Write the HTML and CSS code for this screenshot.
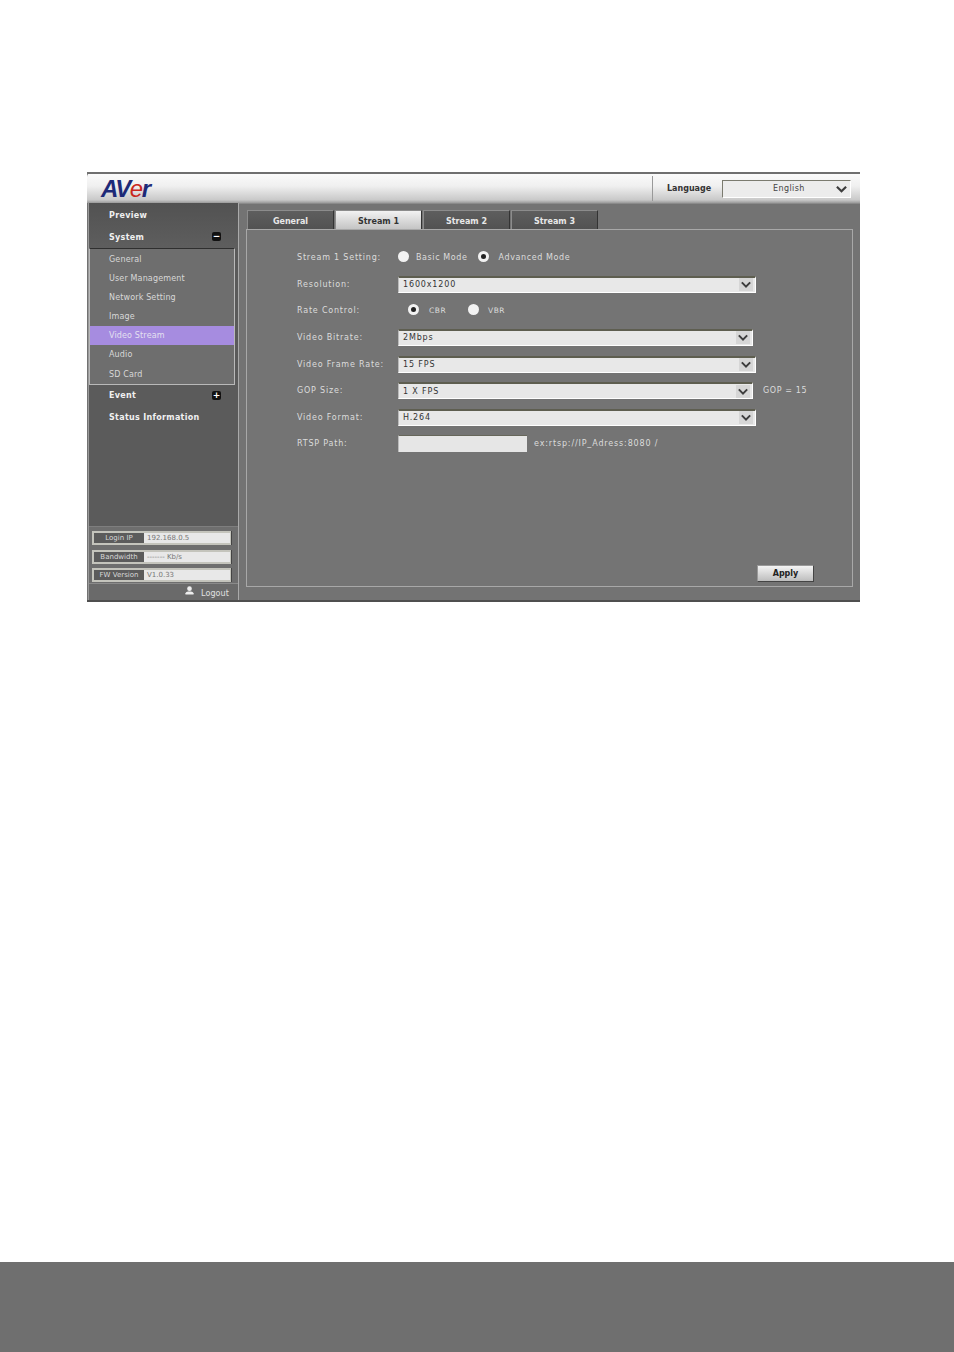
FILE: index.html
```html
<!DOCTYPE html>
<html lang="en">
<head>
<meta charset="utf-8">
<title>AVer Video Stream</title>
<link rel="stylesheet" href="styles.css">
</head>
<body>
<main class="page">
  <section class="app">
    <header class="top">
      <div class="logo"><span>AV</span><em>e</em><span>r</span></div>
      <div class="lang">
        <span class="lang-label">Language</span>
        <div class="lang-select"><span>English</span><svg class="chev" viewBox="0 0 12 8"><path d="M1 1.5 6 6.5 11 1.5" /></svg></div>
      </div>
    </header>
    <div class="body">
      <aside class="side">
        <div class="nav-main first">
          <div class="nav-item">Preview</div>
          <div class="nav-item">System<span class="toggle">−</span></div>
        </div>
        <div class="sub">
          <div class="sub-item">General</div>
          <div class="sub-item">User Management</div>
          <div class="sub-item">Network Setting</div>
          <div class="sub-item">Image</div>
          <div class="sub-item on">Video Stream</div>
          <div class="sub-item">Audio</div>
          <div class="sub-item">SD Card</div>
        </div>
        <div class="nav-main grow">
          <div class="nav-item">Event<span class="toggle">+</span></div>
          <div class="nav-item">Status Information</div>
        </div>
        <div class="info">
          <div class="info-row"><span class="k">Login IP</span><span class="v">192.168.0.5</span></div>
          <div class="info-row"><span class="k">Bandwidth</span><span class="v">------- Kb/s</span></div>
          <div class="info-row"><span class="k">FW Version</span><span class="v">V1.0.33</span></div>
        </div>
        <div class="logout">
          <svg viewBox="0 0 10 10"><circle cx="5" cy="3" r="2.6"/><path d="M0.5 9.5V8Q1 6.2 3.5 6H6.5Q9 6.2 9.5 8V9.5Z"/></svg>
          <span>Logout</span>
        </div>
      </aside>
      <div class="content">
        <nav class="tabs">
          <div class="tab">General</div>
          <div class="tab active">Stream 1</div>
          <div class="tab">Stream 2</div>
          <div class="tab">Stream 3</div>
        </nav>
        <div class="panel">
          <div class="form">
            <div class="row">
              <label>Stream 1 Setting:</label>
              <div class="radios">
                <span class="radio"></span><span class="rl rl-basic">Basic Mode</span>
                <span class="radio sel"></span><span class="rl rl-adv">Advanced Mode</span>
              </div>
            </div>
            <div class="row"><label>Resolution:</label><div class="select"><span>1600x1200</span><b class="btn"><svg class="chev" viewBox="0 0 12 8"><path d="M1 1.5 6 6.5 11 1.5"/></svg></b></div></div>
            <div class="row">
              <label>Rate Control:</label>
              <div class="radios rate">
                <span class="radio sel"></span><span class="rl rl-cbr">CBR</span>
                <span class="radio"></span><span class="rl">VBR</span>
              </div>
            </div>
            <div class="row"><label>Video Bitrate:</label><div class="select short"><span>2Mbps</span><b class="btn"><svg class="chev" viewBox="0 0 12 8"><path d="M1 1.5 6 6.5 11 1.5"/></svg></b></div></div>
            <div class="row"><label>Video Frame Rate:</label><div class="select"><span>15 FPS</span><b class="btn"><svg class="chev" viewBox="0 0 12 8"><path d="M1 1.5 6 6.5 11 1.5"/></svg></b></div></div>
            <div class="row"><label>GOP Size:</label><div class="select short"><span>1 X FPS</span><b class="btn"><svg class="chev" viewBox="0 0 12 8"><path d="M1 1.5 6 6.5 11 1.5"/></svg></b></div><span class="note gop">GOP = 15</span></div>
            <div class="row"><label>Video Format:</label><div class="select"><span>H.264</span><b class="btn"><svg class="chev" viewBox="0 0 12 8"><path d="M1 1.5 6 6.5 11 1.5"/></svg></b></div></div>
            <div class="row"><label>RTSP Path:</label><div class="field"></div><span class="note">ex:rtsp://IP_Adress:8080 /</span></div>
          </div>
          <div class="apply">Apply</div>
        </div>
      </div>
    </div>
  </section>
  <footer class="band"></footer>
</main>
</body>
</html>
```
FILE: styles.css
```css
* { box-sizing: border-box; }
html, body { margin: 0; padding: 0; background: #fff; }
body { font-family: "DejaVu Sans", "Liberation Sans", sans-serif; font-size: 8px; color: #e6e6e6; }
.page { width: 954px; height: 1352px; display: flex; flex-direction: column; padding-top: 172px; overflow: hidden; }

.app { width: 773px; height: 430px; margin-left: 87px; background: #727272; display: flex; flex-direction: column; border-bottom: 2px solid #4f4f4f; }

.top { height: 31px; display: flex; justify-content: space-between; align-items: stretch; background: linear-gradient(#6f6f6f 0 2px, #fafafa 2px, #f0f0f0 45%, #c9c9c9 90%, #9a9a9a); padding-left: 14px; border-radius: 5px 0 0 0; flex: none; }
.logo { font-family: "Liberation Sans", sans-serif; font-weight: bold; font-style: italic; font-size: 24px; letter-spacing: -1.4px; color: #1d2a78; line-height: 33px; }
.logo em { color: #c8281e; font-weight: normal; }
.lang { display: flex; align-items: center; margin-top: 2px; padding-right: 9px; }
.lang-label { color: #333; font-weight: bold; font-size: 8px; width: 70px; height: 25px; line-height: 26px; padding-left: 14px; border-left: 1px solid #999; }
.lang-select { width: 129px; height: 18px; display: flex; align-items: center; justify-content: space-between; padding: 0 3px 0 50px; background: #ececec; border: 1px solid #7b7b6f; border-right-color: #fff; border-bottom-color: #fff; color: #444; letter-spacing: 0.4px; }
.lang-select .chev { width: 11px; height: 8px; }

.chev { display: block; }
.chev path { fill: none; stroke: #3d3d3d; stroke-width: 2.4; }

.body { flex: 1; display: flex; min-height: 0; }

.side { width: 151px; flex: none; display: flex; flex-direction: column; margin-left: 1px; background: #5a5a5a; border-right: 1px solid #aaa; border-left: 1px solid #9a9a9a; }
.nav-main { background: linear-gradient(#525252, #5e5e5e); padding: 1px 0 0; flex: none; }
.nav-main.grow { flex: 1; background: #5b5b5b; padding-top: 0; }
.nav-item { height: 22px; line-height: 22px; padding-left: 20px; font-weight: bold; color: #f0f0f0; position: relative; letter-spacing: 0.3px; }
.first .nav-item { line-height: 24px; }
.toggle { position: absolute; right: 17px; top: 6px; width: 9px; height: 9px; border-radius: 2px; background: #111; color: #fff; font-size: 9px; line-height: 8px; text-align: center; font-weight: bold; letter-spacing: 0; }

.sub { height: 137px; margin-right: 3px; background: #6e6e6e; border: 1px solid #b9b9b9; border-top: 1px solid #2f2f2f; flex: none; padding-top: 1px; }
.sub-item { height: 19.1px; line-height: 19px; padding-left: 19px; color: #d8d8d8; letter-spacing: 0.15px; }
.sub-item.on { background: #a68ce0; color: #e4e0f0; }

.info { height: 58px; padding: 4px 2px 0; flex: none; background: #6e6e6e; border-top: 1px solid #7e7e7e; border-bottom: 1px solid #8a8a8a; display: flex; flex-direction: column; gap: 4.5px; }
.info-row { height: 14px; display: flex; padding: 2px 1px 2px 2px; background: #c4c4bc; margin: 0 4px 0 1px; border-right: 1px solid #444; }
.k { width: 50px; background: #5b5b5b; color: #d8d8d8; font-size: 7px; line-height: 10px; text-align: center; }
.v { flex: 1; background: #e8e8e8; color: #777; font-size: 7px; line-height: 10px; padding-left: 3px; }
.logout { height: 16px; display: flex; align-items: center; justify-content: flex-end; gap: 7px; padding: 0 9px 0 0; background: #6a6a6a; color: #e0e0e0; }
.logout svg { width: 9px; height: 9px; fill: #eee; margin-top: -3px; }
.logout span { margin-top: 2px; letter-spacing: 0.1px; }

.content { flex: 1; padding: 6px 7px 0 8px; background: #737373; border-top: 1px solid #8a8a8a; display: flex; flex-direction: column; }
.tabs { display: flex; gap: 1px; height: 19px; flex: none; }
.tab { width: 87px; text-align: center; line-height: 22px; background: linear-gradient(#5e5e5e, #525252); border: 1px solid #8c8c8c; border-bottom: 0; border-right-color: #333; font-weight: bold; color: #e8e8e8; }
.tab.active { background: linear-gradient(#f2f2f2, #c4c4c4); color: #333; }

.panel { height: 358px; background: #747474; border: 1px solid #a8a8a8; flex: none; position: relative; padding: 14.4px 0 0 50px; margin-left: -1px; }
.form { display: flex; flex-direction: column; }
.row { height: 26.6px; display: flex; align-items: center; color: #dcdcdc; }
.row label { width: 101px; flex: none; letter-spacing: 0.8px; }
.select { width: 358px; height: 17px; display: flex; align-items: center; justify-content: space-between; padding-left: 4px; padding-right: 2px; background: #e8e8e8; border: 1px solid #fff; border-top: 2px solid #5e5e50; border-left-color: #bbb; color: #333; letter-spacing: 0.85px; }
.select.short { width: 355px; }
.btn { width: 14px; height: 13px; background: #d6d6d6; display: flex; align-items: center; justify-content: center; }
.btn .chev { width: 10px; height: 7px; }
.field { width: 129px; height: 17px; background: #e6e6e6; border-top: 1px solid #66665a; border-left: 1px solid #bbb; flex: none; }
.note { margin-left: 7px; letter-spacing: 0.85px; color: #dcdcdc; }
.note.gop { margin-left: 10px; letter-spacing: 0.6px; }
.radios { display: flex; align-items: center; }
.radio { width: 11px; height: 11px; border-radius: 50%; background: #f2f2f2; flex: none; margin-top: -2px; position: relative; }
.radio.sel::after { content: ""; position: absolute; left: 3px; top: 3px; width: 5px; height: 5px; border-radius: 50%; background: #222; }
.rl { margin-left: 7px; color: #dcdcdc; letter-spacing: 0.6px; }
.rl-basic { margin-right: 10px; }
.rl-adv { margin-left: 10px; }
.rate { padding-left: 10px; }
.rate .rl { margin-left: 10px; font-size: 7.5px; letter-spacing: 0.5px; }
.rate .rl-cbr { margin-right: 22px; }
.rate .rl + .radio + .rl { margin-left: 9px; }
.apply { position: absolute; left: 510px; top: 335px; width: 57px; height: 17px; text-align: center; line-height: 16px; font-weight: bold; color: #222; background: linear-gradient(#f4f4f4, #bdbdbd); border: 1px solid #999; border-right-color: #444; border-bottom-color: #444; }

.band { margin-top: auto; height: 90px; background: #6f6f6f; flex: none; }
```
